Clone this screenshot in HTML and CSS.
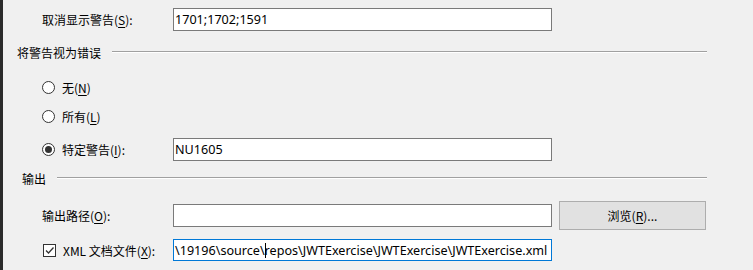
FILE: index.html
```html
<!DOCTYPE html>
<html>
<head>
<meta charset="utf-8">
<link rel="stylesheet" href="styles.css">
</head>
<body>
<div class="panel">
  <div class="row r1">
    <span class="label">取消显示警告(<u>S</u>):</span>
    <div class="input"><span class="val">1701;1702;1591</span></div>
  </div>
  <div class="header h1"><span class="htext">将警告视为错误</span><span class="rule"></span></div>
  <div class="row radio-row rr1">
    <span class="radio"></span><span class="rtext">无(<u>N</u>)</span>
  </div>
  <div class="row radio-row rr2">
    <span class="radio"></span><span class="rtext">所有(<u>L</u>)</span>
  </div>
  <div class="row radio-row rr3">
    <span class="radio checked"></span><span class="rtext rlabel">特定警告(<u>I</u>):</span>
    <div class="input"><span class="val">NU1605</span></div>
  </div>
  <div class="header h2"><span class="htext">输出</span><span class="rule"></span></div>
  <div class="row r-out">
    <span class="label">输出路径(<u>O</u>):</span>
    <div class="input"></div>
    <div class="button">浏览(<u>R</u>)...</div>
  </div>
  <div class="row r-xml">
    <span class="check"><svg width="13" height="13" viewBox="0 0 13 13"><path d="M3 6.5 L5.5 9 L10.5 3.5" fill="none" stroke="#333" stroke-width="1.3"/></svg></span>
    <span class="rtext xlabel">XML 文档文件(<u>X</u>):</span>
    <div class="input focus"><span class="val">\19196\source\<span class="caret"></span>repos\JWTExercise\JWTExercise\JWTExercise.xml</span></div>
  </div>
</div>
</body>
</html>
```
FILE: styles.css
```css
html, body {
  margin: 0;
  padding: 0;
  background: #f0f0f0;
}
body {
  font-family: "Noto Sans CJK SC", "Microsoft YaHei", sans-serif;
  font-size: 12px;
  color: #000;
  width: 753px;
  height: 270px;
  overflow: hidden;
}
u { text-decoration: underline; text-underline-offset: 2px; }
.panel {
  border-left: 3px solid #2b2b2b;
  height: 270px;
  box-sizing: border-box;
  display: flex;
  flex-direction: column;
}
.row {
  display: flex;
  align-items: center;
  padding-left: 39px;
}
.label {
  width: 131px;
  white-space: nowrap;
}
.input {
  width: 379px;
  height: 23px;
  box-sizing: border-box;
  border: 1px solid #7a7a7a;
  background: #fff;
  display: flex;
  align-items: center;
  padding-left: 1px;
  overflow: hidden;
  white-space: nowrap;
  font-family: "Noto Sans", "Noto Sans CJK SC", sans-serif;
  font-size: 12.6px;
}
.input.focus {
  border-color: #0078d7;
  height: 22px;
}
.val { letter-spacing: 0; }
.caret {
  display: inline-block;
  width: 1px;
  height: 15px;
  background: #000;
  vertical-align: -3px;
  margin-right: -1px;
}
.r1 { margin-top: 8px; height: 23px; }
.header {
  display: flex;
  align-items: center;
  height: 20px;
  padding-right: 46px;
}
.h1 { margin-top: 11px; padding-left: 14px; }
.h2 { margin-top: 7px; padding-left: 19px; }
.htext { white-space: nowrap; margin-right: 11px; }
.rule {
  flex: 1;
  height: 1px;
  background: #a0a0a0;
  border-bottom: 1px solid #fff;
}
.radio-row { height: 20px; }
.rr1 { margin-top: 15px; }
.rr2 { margin-top: 9px; }
.rr3 { margin-top: 12px; height: 23px; }
.radio {
  width: 13px;
  height: 13px;
  box-sizing: border-box;
  border: 1px solid #333;
  border-radius: 50%;
  background: #fff;
  display: flex;
  align-items: center;
  justify-content: center;
}
.radio.checked::after {
  content: "";
  width: 7px;
  height: 7px;
  border-radius: 50%;
  background: #333;
}
.rtext { margin-left: 7px; white-space: nowrap; }
.rlabel { width: 111px; }
.r-out { margin-top: 13px; height: 29px; }
.button {
  margin-left: 7px;
  width: 147px;
  height: 29px;
  box-sizing: border-box;
  background: #e1e1e1;
  border: 1px solid #adadad;
  display: flex;
  align-items: center;
  justify-content: center;
}
.r-xml { margin-top: 9px; height: 22px; }
.check {
  width: 13px;
  height: 13px;
  box-sizing: border-box;
  border: 1px solid #333;
  background: #fff;
  display: flex;
  margin-left: 1px;
}
.check svg { margin: -1px; }
.xlabel { width: 110px; }
```
